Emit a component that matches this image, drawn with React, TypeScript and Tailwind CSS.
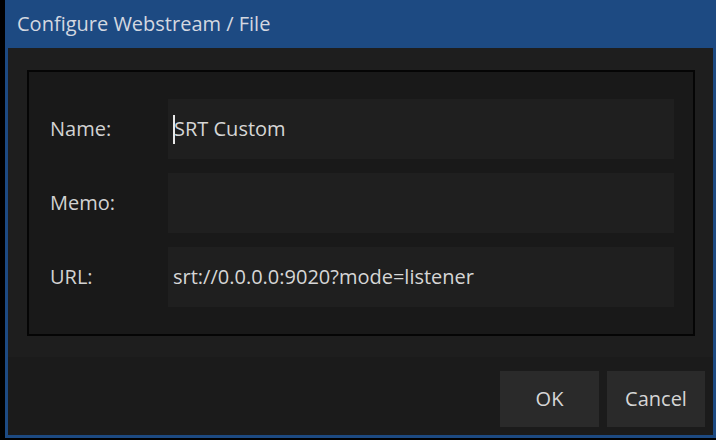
import React from "react";

const fields = [
  { label: "Name:", value: "SRT Custom", caret: true },
  { label: "Memo:", value: "" },
  { label: "URL:", value: "srt://0.0.0.0:9020?mode=listener" },
];

export default function App() {
  return (
    <div
      className="w-[716px] h-[440px] bg-black overflow-hidden"
      style={{ fontFamily: '"Open Sans", "Liberation Sans", Arial, sans-serif' }}
    >
      <div className="ml-[5px] w-[711px] h-[438px] flex flex-col bg-[#1d4a82]">
        {/* title bar */}
        <div className="h-[48px] flex items-center pl-[12px] text-[20px] leading-none text-[#d4d8e0] shrink-0">
          Configure Webstream / File
        </div>

        {/* body */}
        <div className="mx-[3px] mb-[3px] flex-1 flex flex-col bg-[#1e1e1e]">
          <div className="pt-[22px] pl-[19px] pr-[18px] pb-[21px]">
            <div className="border-2 border-[#050505] bg-[#191919] pt-[27px] pb-[27px] pl-[21px] pr-[19px] flex flex-col gap-[14px]">
              {fields.map((f) => (
                <div key={f.label} className="flex items-center">
                  <div className="w-[118px] text-[20px] leading-none text-[#d2d2d2]">
                    {f.label}
                  </div>
                  <div className="flex-1 h-[60px] bg-[#1f1f1f] flex items-center pl-[5px] text-[20px] leading-none text-[#d6d6d6]">
                    {f.caret && (
                      <span className="inline-block w-[2px] h-[29px] bg-[#e8e8e8] -mr-[1px]" />
                    )}
                    {f.value}
                  </div>
                </div>
              ))}
            </div>
          </div>

          <div className="flex-1 bg-[#1b1b1b] flex items-end justify-end gap-[8px] pr-[8px] pb-[8px]">
            <button className="w-[99px] h-[56px] bg-[#2a2a2a] text-[20px] leading-none text-[#d6d6d6]">
              OK
            </button>
            <button className="w-[98px] h-[56px] bg-[#2a2a2a] text-[20px] leading-none text-[#d6d6d6]">
              Cancel
            </button>
          </div>
        </div>
      </div>
    </div>
  );
}
